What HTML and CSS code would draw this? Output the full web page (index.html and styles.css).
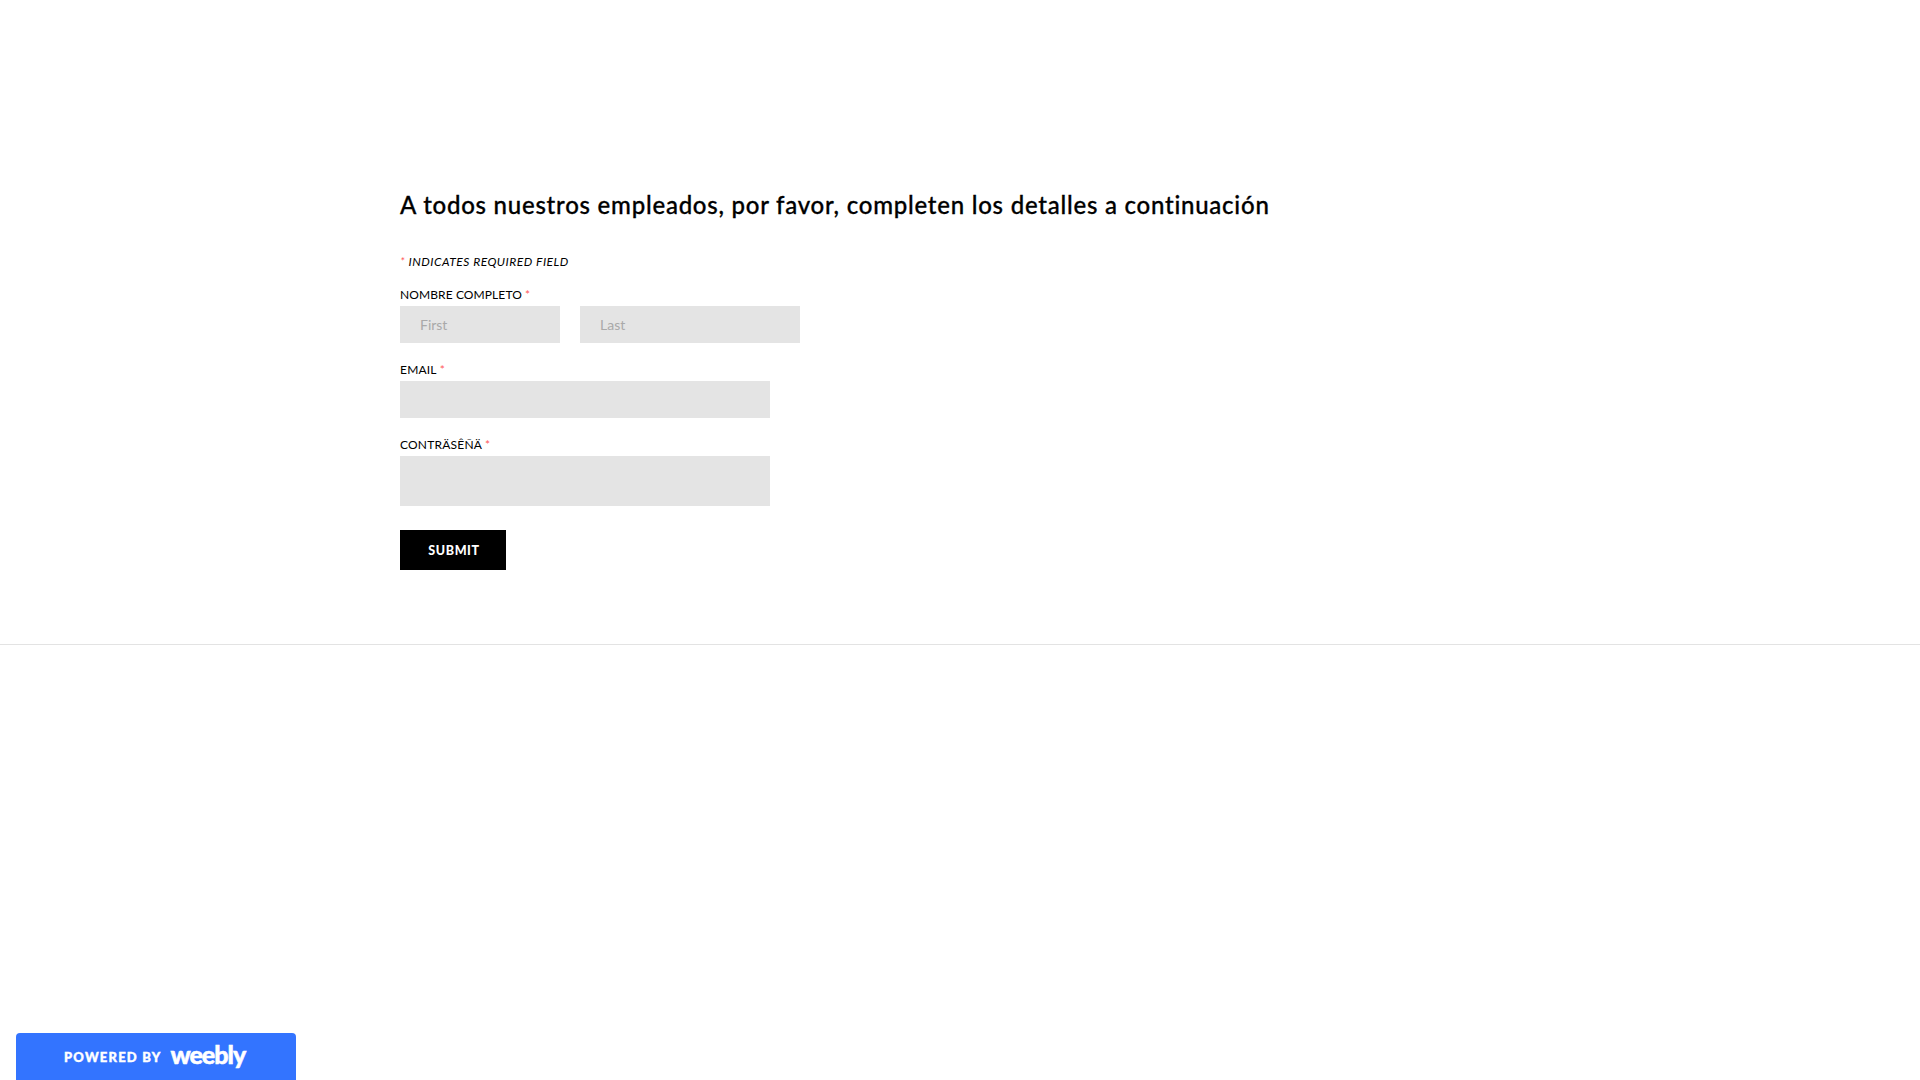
FILE: index.html
```html
<!DOCTYPE html>
<html lang="es">
<head>
    <meta charset="UTF-8">
    <meta name="viewport" content="width=device-width, initial-scale=1.0">
    <title>Detalles de empleados</title>
    <link rel="stylesheet" href="styles.css">
</head>
<body>
    <!-- Main Content -->
    <main class="main-wrap">
        <div class="container">
            <h2 class="title">A todos nuestros empleados, por favor, completen los detalles a continuación</h2>

            <form class="contact-form" action="#" method="post">
                <p class="required-note"><span class="required">*</span> Indicates required field</p>

                <div class="form-field">
                    <label class="form-label name-label" for="first-name">Nombre completo <span class="required">*</span></label>
                    <div class="name-row">
                        <input class="form-input first-name" type="text" id="first-name" placeholder="First">
                        <input class="form-input last-name" type="text" id="last-name" placeholder="Last">
                    </div>
                </div>

                <div class="form-field">
                    <label class="form-label" for="email">Email <span class="required">*</span></label>
                    <input class="form-input" type="text" id="email">
                </div>

                <div class="form-field">
                    <label class="form-label" for="message">Conträsêñä <span class="required">*</span></label>
                    <textarea class="form-input form-textarea" id="message"></textarea>
                </div>

                <button class="submit-btn" type="submit">Submit</button>
            </form>
        </div>
    </main>

    <!-- Footer badge -->
    <a class="weebly-badge" href="#">
        <span class="powered">Powered by</span>
        <span class="weebly">weebly</span>
    </a>
</body>
</html>
```

FILE: styles.css
```css
/* General Reset */
* {
    margin: 0;
    padding: 0;
    box-sizing: border-box;
}

body {
    font-family: Lato, sans-serif;
    background-color: #fff;
    color: #000;
    overflow: hidden;
}

/* Main Content */
.main-wrap {
    height: 645px;
    padding-top: 187px;
    border-bottom: 1px solid #e3e3e3;
}

.container {
    width: 1120px;
    margin: 0 auto;
}

.title {
    font-size: 24px;
    font-weight: 500;
    line-height: 36px;
    letter-spacing: 0.76px;
    white-space: nowrap;
    -webkit-text-stroke: 0.3px #000;
}

/* Form */
.contact-form {
    padding-top: 30px;
}

.required-note {
    height: 34px;
    font-size: 12px;
    font-style: italic;
    line-height: 18px;
    letter-spacing: 0.5px;
    text-transform: uppercase;
}

.required {
    color: #ff5a5a;
}

.form-field {
    margin-bottom: 19px;
}

.form-label {
    display: block;
    height: 19px;
    font-size: 12px;
    line-height: 16px;
    letter-spacing: 0.2px;
    text-transform: uppercase;
}

.name-label {
    letter-spacing: 0.1px;
}

.name-row {
    display: flex;
    gap: 20px;
}

.form-input {
    display: block;
    width: 370px;
    height: 37px;
    padding: 0 20px 1px;
    border: none;
    border-radius: 0;
    background: #e4e4e4;
    font-family: inherit;
    font-size: 14px;
    resize: none;
}

.form-input::placeholder {
    color: #a9a9a9;
}

.first-name {
    width: 160px;
}

.last-name {
    width: 220px;
}

.form-textarea {
    height: 50px;
}

.submit-btn {
    display: block;
    width: 106px;
    height: 40px;
    margin-top: 24px;
    padding-left: 2px;
    border: none;
    background: #000;
    color: #fff;
    font-family: inherit;
    font-size: 12.5px;
    font-weight: 900;
    letter-spacing: 0.6px;
    text-transform: uppercase;
}

/* Footer badge */
.weebly-badge {
    position: fixed;
    left: 16px;
    bottom: 0;
    width: 280px;
    height: 47px;
    padding-left: 48px;
    display: flex;
    align-items: center;
    gap: 9px;
    border-radius: 4px 4px 0 0;
    background: #3374ff;
    color: #fff;
    text-decoration: none;
}

.powered {
    font-size: 13px;
    font-weight: 900;
    letter-spacing: 1.2px;
    text-transform: uppercase;
    -webkit-text-stroke: 0.4px #fff;
}

.weebly {
    font-size: 25px;
    font-weight: 900;
    line-height: 30px;
    padding-bottom: 5px;
    letter-spacing: -1px;
    -webkit-text-stroke: 0.5px #fff;
}
```
